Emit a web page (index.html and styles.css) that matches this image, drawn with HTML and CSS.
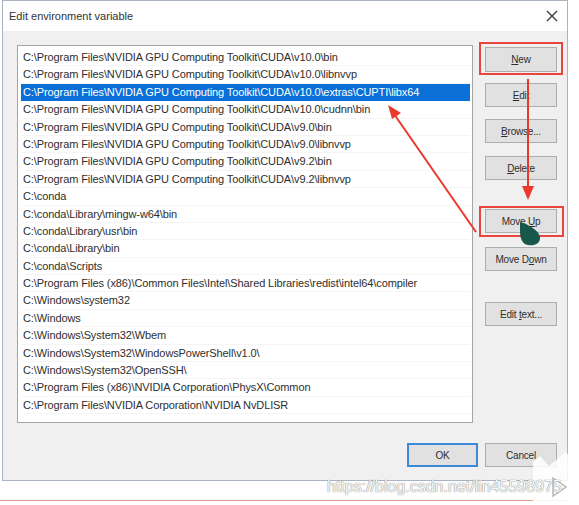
FILE: index.html
```html
<!DOCTYPE html>
<html>
<head>
<meta charset="utf-8">
<link rel="stylesheet" href="styles.css">
</head>
<body>
<div class="page">
  <div class="window">
    <div class="titlebar">
      <span class="title">Edit environment variable</span>
      <svg class="close" width="12" height="12" viewBox="0 0 12 12"><path d="M1 1 L11 11 M11 1 L1 11" stroke="#333" stroke-width="1.2" fill="none"/></svg>
    </div>
    <div class="client">
      <div class="main">
        <div class="listbox">
          <div class="row">C:\Program Files\NVIDIA GPU Computing Toolkit\CUDA\v10.0\bin</div>
          <div class="row">C:\Program Files\NVIDIA GPU Computing Toolkit\CUDA\v10.0\libnvvp</div>
          <div class="row selected">C:\Program Files\NVIDIA GPU Computing Toolkit\CUDA\v10.0\extras\CUPTI\libx64</div>
          <div class="row">C:\Program Files\NVIDIA GPU Computing Toolkit\CUDA\v10.0\cudnn\bin</div>
          <div class="row">C:\Program Files\NVIDIA GPU Computing Toolkit\CUDA\v9.0\bin</div>
          <div class="row">C:\Program Files\NVIDIA GPU Computing Toolkit\CUDA\v9.0\libnvvp</div>
          <div class="row">C:\Program Files\NVIDIA GPU Computing Toolkit\CUDA\v9.2\bin</div>
          <div class="row">C:\Program Files\NVIDIA GPU Computing Toolkit\CUDA\v9.2\libnvvp</div>
          <div class="row">C:\conda</div>
          <div class="row">C:\conda\Library\mingw-w64\bin</div>
          <div class="row">C:\conda\Library\usr\bin</div>
          <div class="row">C:\conda\Library\bin</div>
          <div class="row">C:\conda\Scripts</div>
          <div class="row">C:\Program Files (x86)\Common Files\Intel\Shared Libraries\redist\intel64\compiler</div>
          <div class="row">C:\Windows\system32</div>
          <div class="row">C:\Windows</div>
          <div class="row">C:\Windows\System32\Wbem</div>
          <div class="row">C:\Windows\System32\WindowsPowerShell\v1.0\</div>
          <div class="row">C:\Windows\System32\OpenSSH\</div>
          <div class="row">C:\Program Files (x86)\NVIDIA Corporation\PhysX\Common</div>
          <div class="row">C:\Program Files\NVIDIA Corporation\NVIDIA NvDLISR</div>
        </div>
        <div class="side">
          <div class="btn b-new"><span><u>N</u>ew</span></div>
          <div class="btn b-edit"><span><u>E</u>dit</span></div>
          <div class="btn b-browse"><span><u>B</u>rowse...</span></div>
          <div class="btn b-delete"><span><u>D</u>elete</span></div>
          <div class="btn b-up"><span>Move <u>U</u>p</span></div>
          <div class="btn b-down"><span>Move D<u>o</u>wn</span></div>
          <div class="btn b-text"><span>Edit <u>t</u>ext...</span></div>
        </div>
      </div>
      <div class="footer">
        <div class="btn ok"><span>OK</span></div>
        <div class="btn"><span>Cancel</span></div>
      </div>
    </div>
  </div>
  <div class="below"></div>

  <div class="mark mark-new"></div>
  <div class="mark mark-up"></div>
  <svg class="overlay" width="579" height="505" viewBox="0 0 579 505">
    <line x1="528" y1="79" x2="528" y2="188" stroke="#e8392a" stroke-width="2"/>
    <polygon points="522,186 534,186 528,200" fill="#e8392a"/>
    <line x1="476" y1="232" x2="394" y2="114" stroke="#e8392a" stroke-width="2"/>
    <polygon points="388,105 401,113 392,119" fill="#e8392a"/>
    <path d="M520 222 C528 224 540 231 540 238 C540 244 534 246 528 245 C522 244 520 238 520 231 Z" fill="#17584a"/>
    <path d="M533 462 L540 456 L549 466 L566 452 L571 458 L566 505 L533 505 Z" fill="#ffffff" fill-opacity="0.85"/>
    <polygon points="553,478 566,487 553,496" fill="none" stroke="#b8b8b8" stroke-width="1.5"/>
  </svg>
  <div class="watermark">https://blog.csdn.net/lin45598975</div>
</div>
</body>
</html>
```

FILE: styles.css
```css
html, body {
  margin: 0;
  padding: 0;
  background: #ffffff;
}
.page {
  position: relative;
  width: 579px;
  height: 505px;
  overflow: hidden;
  font-family: "Liberation Sans", Arial, sans-serif;
  font-size: 11px;
  color: #2e2e2e;
}
.window {
  margin-left: 2px;
  width: 566px;
  height: 481px;
  box-sizing: border-box;
  border: 1px solid #a9b3c2;
  display: flex;
  flex-direction: column;
}
.titlebar {
  height: 30px;
  background: #ffffff;
  display: flex;
  align-items: center;
  justify-content: space-between;
  padding: 0 9px 0 6px;
  font-size: 11px;
  color: #333;
}
.close {
  display: block;
}
.client {
  flex: 1;
  background: #f0f0f0;
  display: flex;
  flex-direction: column;
}
.main {
  display: flex;
  padding: 14px 0 0 14px;
  gap: 12px;
}
.listbox {
  width: 456px;
  height: 378px;
  box-sizing: border-box;
  border: 1px solid #a5a5a5;
  background: #ffffff;
  padding: 3px 2px 0 3px;
}
.row {
  height: 17.4px;
  line-height: 17.4px;
  padding-left: 2px;
  white-space: nowrap;
  overflow: hidden;
  letter-spacing: -0.1px;
  box-shadow: inset 0 -1px 0 #f5f5f5;
}
.row.selected {
  background: #0a6fd6;
  color: #ffffff;
  box-shadow: none;
}
.side {
  display: flex;
  flex-direction: column;
}
.btn {
  width: 72px;
  height: 24px;
  box-sizing: border-box;
  border: 1px solid #adadad;
  background: #e1e1e1;
  display: flex;
  align-items: center;
  justify-content: center;
  font-size: 10px;
  letter-spacing: -0.2px;
  color: #2e2e2e;
  white-space: nowrap;
}
.btn u {
  text-decoration-thickness: 1px;
  text-underline-offset: 1px;
}
.b-new { margin-top: 2px; height: 25px; }
.b-edit { margin-top: 11px; }
.b-browse { margin-top: 12px; }
.b-delete { margin-top: 13px; }
.b-up { margin-top: 29px; }
.b-down { margin-top: 14px; }
.b-text { margin-top: 31px; }
.footer {
  display: flex;
  justify-content: flex-end;
  gap: 7px;
  padding: 20px 10px 0 0;
}
.btn.ok {
  width: 71px;
  border: 2px solid #3c8ad8;
}
.below {
  margin-top: 19px;
  width: 566px;
  height: 1px;
  background: #e4a08d;
}
.mark {
  position: absolute;
  box-sizing: border-box;
  border: 2px solid #e8463c;
}
.mark-new {
  left: 479px;
  top: 42px;
  width: 84px;
  height: 33px;
}
.mark-up {
  left: 479px;
  top: 206px;
  width: 85px;
  height: 31px;
}
.overlay {
  position: absolute;
  left: 0;
  top: 0;
}
.watermark {
  position: absolute;
  left: 327px;
  top: 478px;
  font-family: "Liberation Sans", Arial, sans-serif;
  font-size: 16px;
  color: rgba(255, 255, 255, 0.95);
  text-shadow: 0 0 1px #8a8a8a, 0 0 1px #8a8a8a;
  white-space: nowrap;
}
```
